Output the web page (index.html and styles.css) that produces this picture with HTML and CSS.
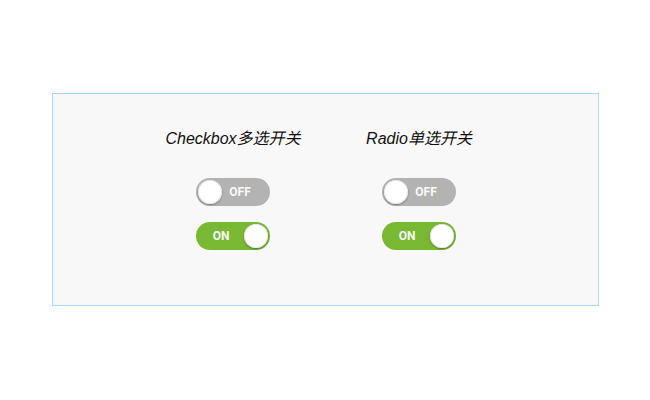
FILE: index.html
```html
<!DOCTYPE html>
<html lang="zh-CN">
<head>
<meta charset="utf-8">
<title>开关</title>
<link rel="stylesheet" href="styles.css">
</head>
<body>
<div class="box">
  <div class="col">
    <h3 class="title">Checkbox多选开关</h3>
    <label class="switch"><input type="checkbox"><span class="track"><span class="txt">OFF</span><span class="knob"></span></span></label>
    <label class="switch"><input type="checkbox" checked><span class="track"><span class="txt">ON</span><span class="knob"></span></span></label>
  </div>
  <div class="col">
    <h3 class="title">Radio单选开关</h3>
    <label class="switch"><input type="radio" name="r"><span class="track"><span class="txt">OFF</span><span class="knob"></span></span></label>
    <label class="switch"><input type="radio" name="r" checked><span class="track"><span class="txt">ON</span><span class="knob"></span></span></label>
  </div>
</div>
</body>
</html>
```
FILE: styles.css
```css
html, body { margin: 0; padding: 0; background: #fff; }
body { padding-top: 93px; }
.box {
  width: 543px;
  margin: 0 auto;
  border: 1px solid #a8d8f8;
  background: #f8f8f8;
  display: flex;
  justify-content: center;
  padding: 35px 0 55px 2px;
}
.col {
  width: 186px;
  display: flex;
  flex-direction: column;
  align-items: center;
}
.title {
  margin: 0 0 29px;
  font: italic normal 16px/20px "Liberation Sans", "Noto Sans CJK SC", sans-serif;
  color: #111;
}
.switch { display: block; margin-bottom: 16px; cursor: pointer; }
.switch:last-child { margin-bottom: 0; }
.switch input { display: none; }
.track {
  position: relative;
  display: flex;
  align-items: center;
  width: 74px;
  height: 28px;
  border-radius: 14px;
  background: #b3b3b3;
  box-sizing: border-box;
  padding: 0 16px 0 30px;
}
.txt {
  flex: 1;
  text-align: center;
  font: bold 12px/1 Roboto, sans-serif;
  color: #fafafa;
}
.knob {
  position: absolute;
  top: 2px;
  left: 2px;
  width: 24px;
  height: 24px;
  border-radius: 50%;
  background: #fff;
  box-shadow: 0 1px 2px rgba(0,0,0,.35), inset 0 0 0 1px #e4e4e4;
}
.switch input:checked + .track {
  background: #78b832;
  padding: 0 32px 0 8px;
}
.switch input:checked + .track .knob { left: auto; right: 2px; }
```
